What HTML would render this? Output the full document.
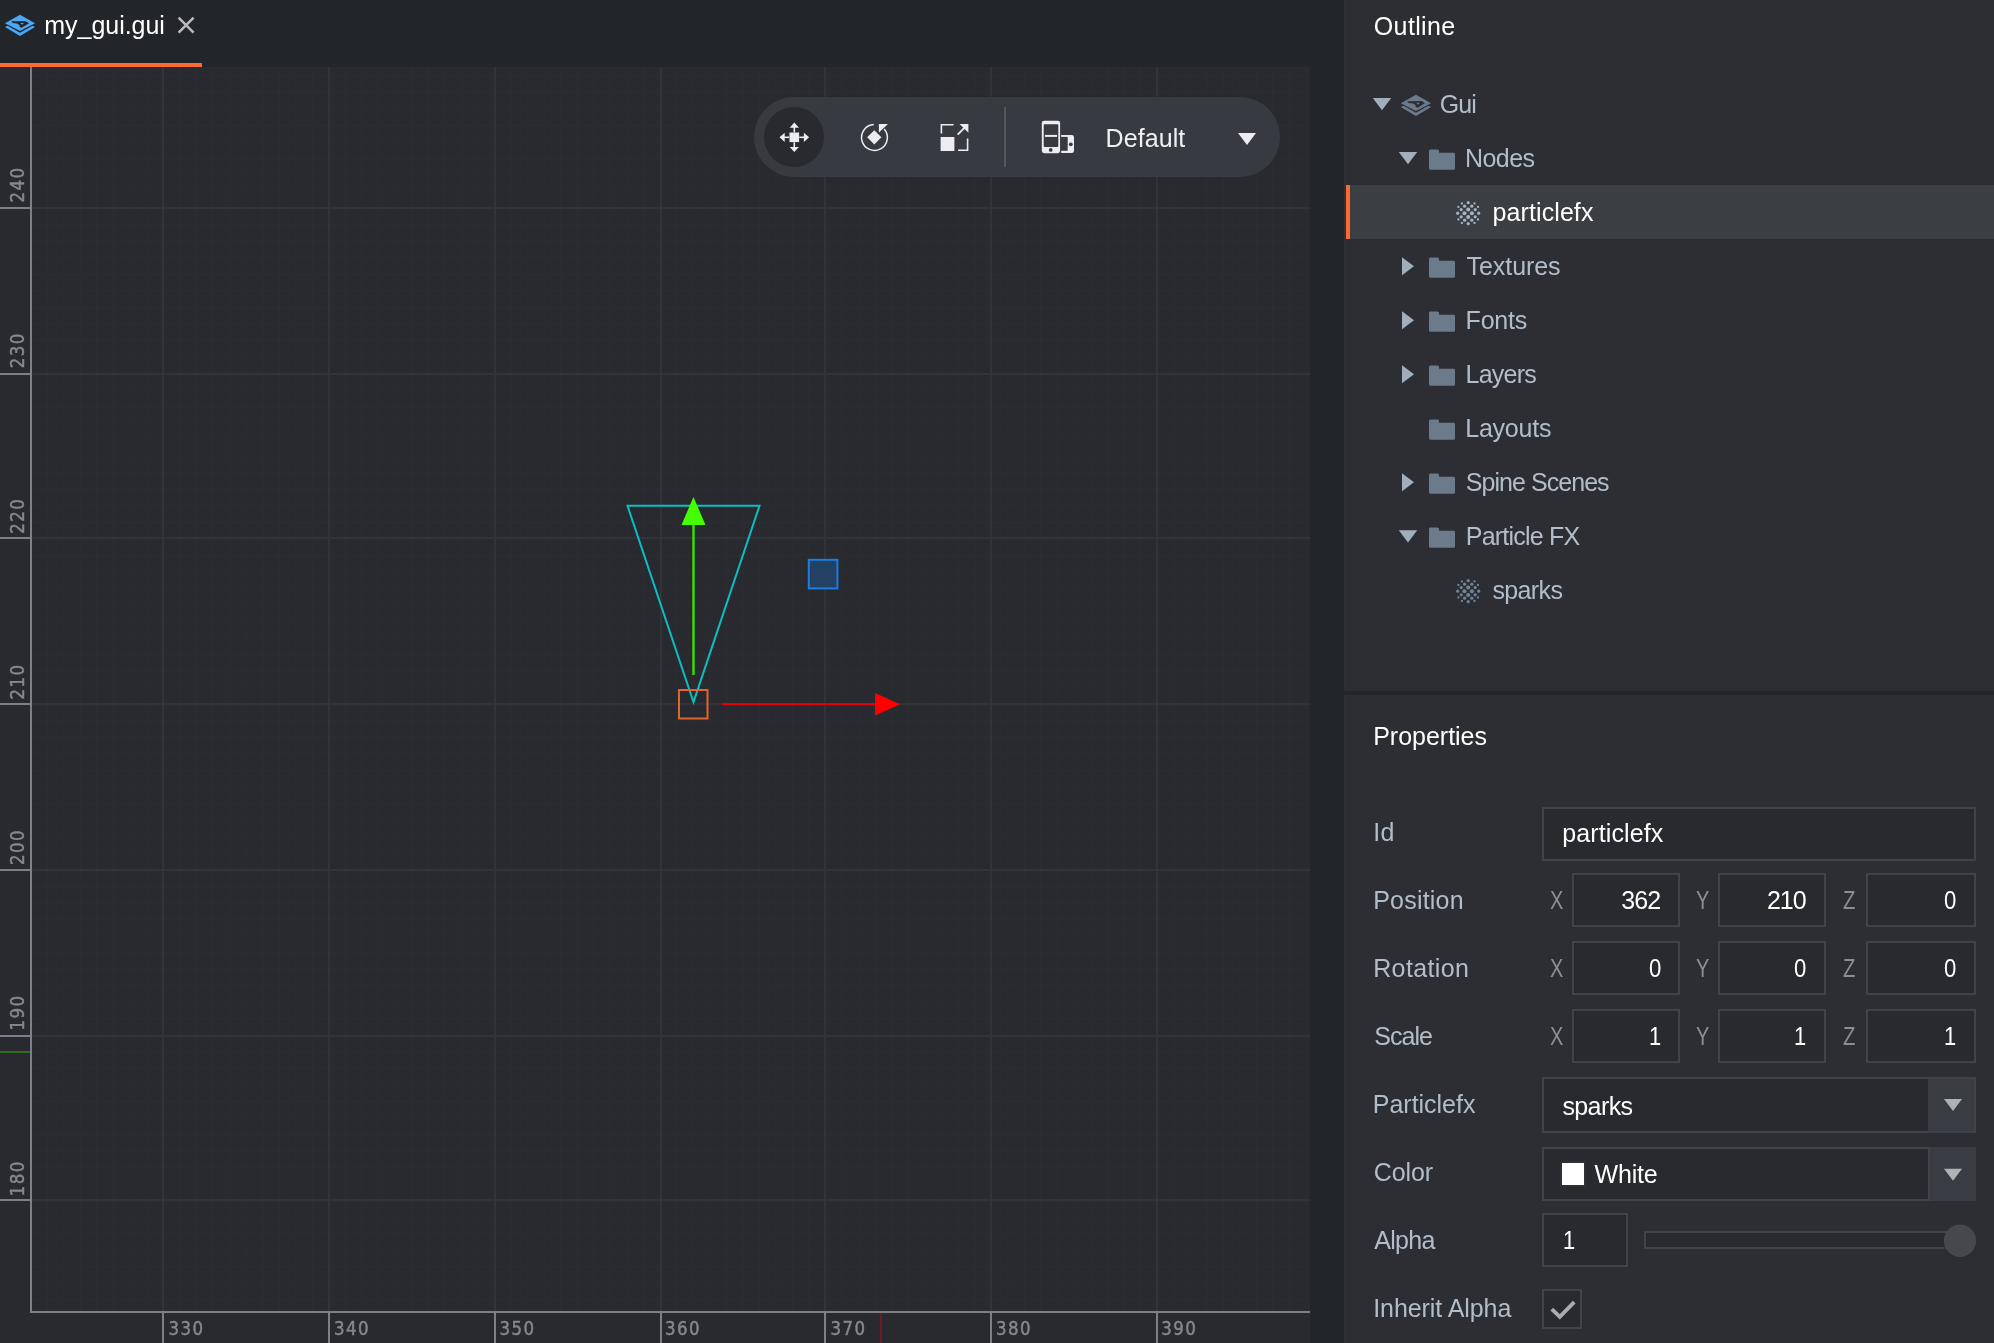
<!DOCTYPE html>
<html lang="en">
<head>
<meta charset="utf-8">
<title>my_gui.gui</title>
<style>
html,body{margin:0;padding:0;}
body{width:1994px;height:1343px;overflow:hidden;background:#22252a;position:relative;
  font-family:"Liberation Sans",sans-serif;font-size:25px;color:#b3bdc9;}
*{box-sizing:border-box;}
.abs{position:absolute;}
.t{position:absolute;white-space:nowrap;line-height:30px;height:30px;}
#tabline{left:0;top:63px;width:202px;height:4px;background:#fd6a2f;}
#panel{left:1344px;top:0;width:650px;height:1343px;background:#2d2e34;border-left:1px solid #303137;}
#divider{left:1344px;top:691px;width:650px;height:3.6px;background:#22252a;}
#selrow{left:1346px;top:185px;width:648px;height:54px;background:#3b3e43;}
#selbar{left:1346px;top:185px;width:4px;height:54px;background:#fd6a2f;}
.field{position:absolute;background:#292a30;border:2px solid #40434b;height:54px;}
.btn{position:absolute;background:#393c42;}
svg{position:absolute;left:0;top:0;overflow:hidden;}
svg text{font-family:"DejaVu Sans Condensed","DejaVu Sans",sans-serif;}
</style>
</head>
<body>
<div id="tabline" class="abs"></div>
<div id="panel" class="abs"></div>
<div id="divider" class="abs"></div>
<div id="selrow" class="abs"></div>
<div id="selbar" class="abs"></div>
<svg width="1344" height="1343" viewBox="0 0 1344 1343" style="will-change:transform">
<rect x="0" y="67" width="1310" height="1276" fill="#292a30"/>
<defs><pattern id="mg" x="162.4" y="207.4" width="16.563" height="16.54" patternUnits="userSpaceOnUse"><rect x="0" y="0" width="1.2" height="16.54" fill="#2a2c31"/><rect x="0" y="0" width="16.563" height="1.2" fill="#2a2c31"/></pattern></defs>
<rect x="32" y="67" width="1278" height="1244" fill="url(#mg)"/>
<rect x="162.0" y="67" width="2" height="1244" fill="#303338"/>
<rect x="328.0" y="67" width="2" height="1244" fill="#303338"/>
<rect x="494.0" y="67" width="2" height="1244" fill="#303338"/>
<rect x="660.0" y="67" width="2" height="1244" fill="#303338"/>
<rect x="824.0" y="67" width="2" height="1244" fill="#303338"/>
<rect x="990.0" y="67" width="2" height="1244" fill="#303338"/>
<rect x="1156.0" y="67" width="2" height="1244" fill="#303338"/>
<rect x="32" y="207.0" width="1278" height="2" fill="#303338"/>
<rect x="32" y="373.0" width="1278" height="2" fill="#303338"/>
<rect x="32" y="537.0" width="1278" height="2" fill="#303338"/>
<rect x="32" y="703.0" width="1278" height="2" fill="#303338"/>
<rect x="32" y="869.0" width="1278" height="2" fill="#303338"/>
<rect x="32" y="1035.0" width="1278" height="2" fill="#303338"/>
<rect x="32" y="1199.0" width="1278" height="2" fill="#303338"/>
<rect x="30" y="67" width="2" height="1246" fill="#7d8086"/>
<rect x="30" y="1311" width="1280" height="2" fill="#7d8086"/>
<rect x="162.0" y="1313" width="2" height="30" fill="#7d8086"/>
<text transform="translate(168.6 1335.2) scale(0.94 1)" font-size="19.7" letter-spacing="1.5" fill="#85888e" stroke="#85888e" stroke-width="0.45">330</text>
<rect x="328.0" y="1313" width="2" height="30" fill="#7d8086"/>
<text transform="translate(334.0 1335.2) scale(0.94 1)" font-size="19.7" letter-spacing="1.5" fill="#85888e" stroke="#85888e" stroke-width="0.45">340</text>
<rect x="494.0" y="1313" width="2" height="30" fill="#7d8086"/>
<text transform="translate(499.5 1335.2) scale(0.94 1)" font-size="19.7" letter-spacing="1.5" fill="#85888e" stroke="#85888e" stroke-width="0.45">350</text>
<rect x="660.0" y="1313" width="2" height="30" fill="#7d8086"/>
<text transform="translate(664.9 1335.2) scale(0.94 1)" font-size="19.7" letter-spacing="1.5" fill="#85888e" stroke="#85888e" stroke-width="0.45">360</text>
<rect x="824.0" y="1313" width="2" height="30" fill="#7d8086"/>
<text transform="translate(830.4 1335.2) scale(0.94 1)" font-size="19.7" letter-spacing="1.5" fill="#85888e" stroke="#85888e" stroke-width="0.45">370</text>
<rect x="990.0" y="1313" width="2" height="30" fill="#7d8086"/>
<text transform="translate(995.9 1335.2) scale(0.94 1)" font-size="19.7" letter-spacing="1.5" fill="#85888e" stroke="#85888e" stroke-width="0.45">380</text>
<rect x="1156.0" y="1313" width="2" height="30" fill="#7d8086"/>
<text transform="translate(1161.3 1335.2) scale(0.94 1)" font-size="19.7" letter-spacing="1.5" fill="#85888e" stroke="#85888e" stroke-width="0.45">390</text>
<rect x="0" y="207.0" width="30" height="2" fill="#7d8086"/>
<text transform="translate(24.2 202.6) rotate(-90) scale(0.94 1)" font-size="19.7" letter-spacing="1.5" fill="#85888e" stroke="#85888e" stroke-width="0.45">240</text>
<rect x="0" y="373.0" width="30" height="2" fill="#7d8086"/>
<text transform="translate(24.2 368.2) rotate(-90) scale(0.94 1)" font-size="19.7" letter-spacing="1.5" fill="#85888e" stroke="#85888e" stroke-width="0.45">230</text>
<rect x="0" y="537.0" width="30" height="2" fill="#7d8086"/>
<text transform="translate(24.2 533.8) rotate(-90) scale(0.94 1)" font-size="19.7" letter-spacing="1.5" fill="#85888e" stroke="#85888e" stroke-width="0.45">220</text>
<rect x="0" y="703.0" width="30" height="2" fill="#7d8086"/>
<text transform="translate(24.2 699.4) rotate(-90) scale(0.94 1)" font-size="19.7" letter-spacing="1.5" fill="#85888e" stroke="#85888e" stroke-width="0.45">210</text>
<rect x="0" y="869.0" width="30" height="2" fill="#7d8086"/>
<text transform="translate(24.2 865.0) rotate(-90) scale(0.94 1)" font-size="19.7" letter-spacing="1.5" fill="#85888e" stroke="#85888e" stroke-width="0.45">200</text>
<rect x="0" y="1035.0" width="30" height="2" fill="#7d8086"/>
<text transform="translate(24.2 1030.6) rotate(-90) scale(0.94 1)" font-size="19.7" letter-spacing="1.5" fill="#85888e" stroke="#85888e" stroke-width="0.45">190</text>
<rect x="0" y="1199.0" width="30" height="2" fill="#7d8086"/>
<text transform="translate(24.2 1196.2) rotate(-90) scale(0.94 1)" font-size="19.7" letter-spacing="1.5" fill="#85888e" stroke="#85888e" stroke-width="0.45">180</text>
<rect x="0" y="1051" width="30" height="2" fill="#2e7020"/>
<rect x="880" y="1313" width="2" height="30" fill="#6e1c20"/>
<polygon points="627.5,505.8 759.5,505.8 693.5,702" fill="none" stroke="#0abfc1" stroke-width="2"/>
<rect x="808.8" y="559.8" width="28.6" height="28.6" fill="#244063" stroke="#1b7ee0" stroke-width="2"/>
<rect x="679" y="690" width="28.5" height="28.5" fill="none" stroke="#e0652c" stroke-width="2"/>
<rect x="692.3" y="524" width="2.4" height="151" fill="#3fe000"/>
<polygon points="693.5,497 705.5,525 681.5,525" fill="#44ff00"/>
<rect x="722" y="703" width="154" height="2.4" fill="#e00008"/>
<polygon points="900,704.2 875,693 875,715.5" fill="#ff0000"/>
<rect x="754" y="97" width="526" height="80" rx="40" fill="#383a42"/>
<circle cx="794" cy="137" r="30" fill="#292a30"/>
<rect x="1004" y="107" width="2" height="60" fill="#54565c"/>
<g transform="translate(794.3 137.3)" fill="#ececf2" stroke="none"><rect x="-4.8" y="-4.8" width="9.6" height="9.6"/><rect x="-0.8" y="-11" width="1.6" height="6"/><rect x="-0.8" y="5" width="1.6" height="6"/><rect x="-11" y="-0.8" width="6" height="1.6"/><rect x="5" y="-0.8" width="6" height="1.6"/><polygon points="0,-14.8 4.6,-9.6 -4.6,-9.6"/><polygon points="0,14.8 4.6,9.6 -4.6,9.6"/><polygon points="-14.8,0 -9.6,-4.6 -9.6,4.6"/><polygon points="14.8,0 9.6,-4.6 9.6,4.6"/></g>
<g><path d="M 873.78,124.62 A 12.9,12.9 0 1 0 884.19,129.04" fill="none" stroke="#ececf2" stroke-width="1.5"/><polygon points="874.3,130.2 881.4,137.3 874.3,144.4 867.2,137.3" fill="#ececf2"/><polygon points="878.9,124.1 888,124.1 878.9,132.4" fill="#ececf2"/></g>
<g fill="#ececf2"><rect x="940.6" y="137" width="13.8" height="14"/><path d="M940.6,133.5 v-9.6 h13 v1.6 h-11.4 v8 z"/><path d="M958,151 v-1.6 h8.8 v-11 h1.6 v12.6 z"/><polygon points="959.5,123.9 968.4,123.9 968.4,132.8"/><path d="M957,134 l8.2,-8.2 l1.3,1.3 l-8.2,8.2 z"/></g>
<g><rect x="1041.8" y="120.7" width="18.3" height="32.5" rx="2.4" fill="#ececf2"/><rect x="1043.7" y="124.3" width="14.6" height="22.6" rx="0.8" fill="#383a42"/><rect x="1044.9" y="134.9" width="12.2" height="2" fill="#ececf2"/><circle cx="1050.7" cy="149.9" r="1.9" fill="#383a42"/><path d="M1061.2,134.9 h10.6 q2.2,0 2.2,2.2 v13.7 q0,2.2 -2.2,2.2 h-10.6 z" fill="#ececf2"/><rect x="1060.6" y="136.9" width="7.1" height="13.9" fill="#383a42"/><circle cx="1070.8" cy="144.3" r="1.9" fill="#383a42"/></g>
<polygon points="1238,133 1256,133 1247,145" fill="#ececf2"/>
<g transform="translate(4.94 14.84)"><polygon points="15.06,0 30.12,8.36 15.06,16.2 0,8.36" fill="#4aa8f5"/><polygon points="0,12.1 15.06,21.13 30.12,12.1 27.5,10.85 15.06,17.85 2.65,10.85" fill="#4aa8f5"/><polygon points="6.1,6.4 20.75,6.3 24.1,8.5 16.6,13.0 14.4,11.9 14.95,10.7 12.2,8.65 7.7,8.15" fill="#22252a"/><polygon points="15.3,8.05 18.85,8.05 17.35,9.95" fill="#4aa8f5"/></g>
<path d="M178.6,17.6 L193.6,32.6 M193.6,17.6 L178.6,32.6" stroke="#b9b9b9" stroke-width="2.6" fill="none"/>
</svg>
<div class="field" style="left:1542px;top:807px;width:434px;height:54px;"></div>
<div class="field" style="left:1572px;top:873px;width:108px;height:54px;"></div>
<div class="field" style="left:1718px;top:873px;width:108px;height:54px;"></div>
<div class="field" style="left:1866px;top:873px;width:110px;height:54px;"></div>
<div class="field" style="left:1572px;top:941px;width:108px;height:54px;"></div>
<div class="field" style="left:1718px;top:941px;width:108px;height:54px;"></div>
<div class="field" style="left:1866px;top:941px;width:110px;height:54px;"></div>
<div class="field" style="left:1572px;top:1009px;width:108px;height:54px;"></div>
<div class="field" style="left:1718px;top:1009px;width:108px;height:54px;"></div>
<div class="field" style="left:1866px;top:1009px;width:110px;height:54px;"></div>
<div class="field" style="left:1542px;top:1077px;width:434px;height:56px;"></div>
<div class="btn" style="left:1928px;top:1079px;width:46px;height:52px;"></div>
<div class="field" style="left:1542px;top:1147px;width:434px;height:54px;"></div>
<div class="abs" style="left:1928px;top:1149px;width:2px;height:50px;background:#40434b;"></div>
<div class="btn" style="left:1930px;top:1147px;width:46px;height:54px;"></div>
<div class="abs" style="left:1560px;top:1161px;width:26px;height:26px;background:#ffffff;border:2px solid #2f3036;"></div>
<div class="field" style="left:1542px;top:1213px;width:86px;height:54px;"></div>
<div class="field" style="left:1644px;top:1231px;width:310px;height:18px;"></div>
<div class="field" style="left:1542px;top:1289px;width:40px;height:40px;"></div>
<svg width="1994" height="1343" viewBox="0 0 1994 1343" style="pointer-events:none">
<polygon points="1372.8,98.0 1391.2,98.0 1382.0,110.2" fill="#a1afbc"/>
<g transform="translate(1400.90 94.80)"><polygon points="15.06,0 30.12,8.36 15.06,16.2 0,8.36" fill="#6c7b8c"/><polygon points="0,12.1 15.06,21.13 30.12,12.1 27.5,10.85 15.06,17.85 2.65,10.85" fill="#6c7b8c"/><polygon points="6.1,6.4 20.75,6.3 24.1,8.5 16.6,13.0 14.4,11.9 14.95,10.7 12.2,8.65 7.7,8.15" fill="#2d2e34"/><polygon points="15.3,8.05 18.85,8.05 17.35,9.95" fill="#6c7b8c"/></g>
<polygon points="1398.8,152.0 1417.2,152.0 1408.0,164.2" fill="#a1afbc"/>
<path d="M1429.0,151.0 q0,-1.5 1.5,-1.5 h7 q1.5,0 1.5,1.5 v1.8 h14.6 q1.4,0 1.4,1.4 v14.4 q0,1.1 -1.1,1.1 h-23.8 q-1.1,0 -1.1,-1.1 z" fill="#6c7b8c"/>
<g fill="#b6c5d4" opacity="0.88"><circle cx="1471.80" cy="220.20" r="1.60"/><circle cx="1475.20" cy="216.80" r="1.60"/><circle cx="1474.50" cy="223.00" r="1.15"/><circle cx="1478.00" cy="219.50" r="1.15"/><circle cx="1471.80" cy="206.20" r="1.60"/><circle cx="1475.20" cy="209.60" r="1.60"/><circle cx="1474.50" cy="203.40" r="1.15"/><circle cx="1478.00" cy="206.90" r="1.15"/><circle cx="1464.60" cy="220.20" r="1.60"/><circle cx="1461.20" cy="216.80" r="1.60"/><circle cx="1461.90" cy="223.00" r="1.15"/><circle cx="1458.40" cy="219.50" r="1.15"/><circle cx="1464.60" cy="206.20" r="1.60"/><circle cx="1461.20" cy="209.60" r="1.60"/><circle cx="1461.90" cy="203.40" r="1.15"/><circle cx="1458.40" cy="206.90" r="1.15"/><circle cx="1468.20" cy="216.95" r="2.05"/><circle cx="1471.95" cy="213.20" r="2.05"/><circle cx="1468.20" cy="223.70" r="1.60"/><circle cx="1478.70" cy="213.20" r="1.60"/><circle cx="1468.20" cy="209.45" r="2.05"/><circle cx="1464.45" cy="213.20" r="2.05"/><circle cx="1468.20" cy="202.70" r="1.60"/><circle cx="1457.70" cy="213.20" r="1.60"/></g>
<polygon points="1402.0,257.3 1414.0,266.3 1402.0,275.3" fill="#a1afbc"/>
<path d="M1429.0,259.0 q0,-1.5 1.5,-1.5 h7 q1.5,0 1.5,1.5 v1.8 h14.6 q1.4,0 1.4,1.4 v14.4 q0,1.1 -1.1,1.1 h-23.8 q-1.1,0 -1.1,-1.1 z" fill="#6c7b8c"/>
<polygon points="1402.0,311.3 1414.0,320.3 1402.0,329.3" fill="#a1afbc"/>
<path d="M1429.0,313.0 q0,-1.5 1.5,-1.5 h7 q1.5,0 1.5,1.5 v1.8 h14.6 q1.4,0 1.4,1.4 v14.4 q0,1.1 -1.1,1.1 h-23.8 q-1.1,0 -1.1,-1.1 z" fill="#6c7b8c"/>
<polygon points="1402.0,365.3 1414.0,374.3 1402.0,383.3" fill="#a1afbc"/>
<path d="M1429.0,367.0 q0,-1.5 1.5,-1.5 h7 q1.5,0 1.5,1.5 v1.8 h14.6 q1.4,0 1.4,1.4 v14.4 q0,1.1 -1.1,1.1 h-23.8 q-1.1,0 -1.1,-1.1 z" fill="#6c7b8c"/>
<path d="M1429.0,421.0 q0,-1.5 1.5,-1.5 h7 q1.5,0 1.5,1.5 v1.8 h14.6 q1.4,0 1.4,1.4 v14.4 q0,1.1 -1.1,1.1 h-23.8 q-1.1,0 -1.1,-1.1 z" fill="#6c7b8c"/>
<polygon points="1402.0,473.3 1414.0,482.3 1402.0,491.3" fill="#a1afbc"/>
<path d="M1429.0,475.0 q0,-1.5 1.5,-1.5 h7 q1.5,0 1.5,1.5 v1.8 h14.6 q1.4,0 1.4,1.4 v14.4 q0,1.1 -1.1,1.1 h-23.8 q-1.1,0 -1.1,-1.1 z" fill="#6c7b8c"/>
<polygon points="1398.8,530.3 1417.2,530.3 1408.0,542.5" fill="#a1afbc"/>
<path d="M1429.0,529.0 q0,-1.5 1.5,-1.5 h7 q1.5,0 1.5,1.5 v1.8 h14.6 q1.4,0 1.4,1.4 v14.4 q0,1.1 -1.1,1.1 h-23.8 q-1.1,0 -1.1,-1.1 z" fill="#6c7b8c"/>
<g fill="#7e8fa3" opacity="0.88"><circle cx="1471.80" cy="598.20" r="1.60"/><circle cx="1475.20" cy="594.80" r="1.60"/><circle cx="1474.50" cy="601.00" r="1.15"/><circle cx="1478.00" cy="597.50" r="1.15"/><circle cx="1471.80" cy="584.20" r="1.60"/><circle cx="1475.20" cy="587.60" r="1.60"/><circle cx="1474.50" cy="581.40" r="1.15"/><circle cx="1478.00" cy="584.90" r="1.15"/><circle cx="1464.60" cy="598.20" r="1.60"/><circle cx="1461.20" cy="594.80" r="1.60"/><circle cx="1461.90" cy="601.00" r="1.15"/><circle cx="1458.40" cy="597.50" r="1.15"/><circle cx="1464.60" cy="584.20" r="1.60"/><circle cx="1461.20" cy="587.60" r="1.60"/><circle cx="1461.90" cy="581.40" r="1.15"/><circle cx="1458.40" cy="584.90" r="1.15"/><circle cx="1468.20" cy="594.95" r="2.05"/><circle cx="1471.95" cy="591.20" r="2.05"/><circle cx="1468.20" cy="601.70" r="1.60"/><circle cx="1478.70" cy="591.20" r="1.60"/><circle cx="1468.20" cy="587.45" r="2.05"/><circle cx="1464.45" cy="591.20" r="2.05"/><circle cx="1468.20" cy="580.70" r="1.60"/><circle cx="1457.70" cy="591.20" r="1.60"/></g>
<polygon points="1944,1099 1962,1099 1953,1111" fill="#b0b1b3"/>
<polygon points="1944,1168.8 1962,1168.8 1953,1180.8" fill="#b0b1b3"/>
<circle cx="1960" cy="1242" r="16.6" fill="#25262b" opacity="0.35"/>
<circle cx="1960" cy="1240.8" r="16.2" fill="#46484d"/>
<polyline points="1551.8,1309.1 1559.8,1316.9 1574.2,1302.1" fill="none" stroke="#aaacaf" stroke-width="3.8"/>
</svg>
<span class="t" style="left:44.30px;top:9.53px;color:#ffffff;letter-spacing:-0.038px">my_gui.gui</span>
<span class="t" style="left:1105.60px;top:123.23px;color:#eef0f5;letter-spacing:0.072px">Default</span>
<span class="t" style="left:1373.80px;top:11.33px;color:#ffffff;letter-spacing:0.365px">Outline</span>
<span class="t" style="left:1439.70px;top:89.03px;color:#b3bdc9;letter-spacing:-0.875px">Gui</span>
<span class="t" style="left:1465.10px;top:143.03px;color:#b3bdc9;letter-spacing:-0.591px">Nodes</span>
<span class="t" style="left:1492.60px;top:197.33px;color:#ffffff;letter-spacing:0.085px">particlefx</span>
<span class="t" style="left:1466.50px;top:251.33px;color:#b3bdc9;letter-spacing:-0.055px">Textures</span>
<span class="t" style="left:1465.60px;top:305.33px;color:#b3bdc9;letter-spacing:-0.231px">Fonts</span>
<span class="t" style="left:1465.60px;top:359.33px;color:#b3bdc9;letter-spacing:-0.767px">Layers</span>
<span class="t" style="left:1465.30px;top:413.33px;color:#b3bdc9;letter-spacing:-0.244px">Layouts</span>
<span class="t" style="left:1465.80px;top:467.33px;color:#b3bdc9;letter-spacing:-0.952px">Spine Scenes</span>
<span class="t" style="left:1465.80px;top:521.33px;color:#b3bdc9;letter-spacing:-0.798px">Particle FX</span>
<span class="t" style="left:1492.40px;top:575.33px;color:#b3bdc9;letter-spacing:-0.627px">sparks</span>
<span class="t" style="left:1373.20px;top:721.03px;color:#ffffff;letter-spacing:-0.016px">Properties</span>
<span class="t" style="left:1373.20px;top:816.63px;color:#b3bdc9;letter-spacing:0.454px">Id</span>
<span class="t" style="left:1373.20px;top:884.68px;color:#b3bdc9;letter-spacing:0.209px">Position</span>
<span class="t" style="left:1373.20px;top:952.73px;color:#b3bdc9;letter-spacing:0.370px">Rotation</span>
<span class="t" style="left:1374.20px;top:1020.78px;color:#b3bdc9;letter-spacing:-0.958px">Scale</span>
<span class="t" style="left:1372.80px;top:1088.83px;color:#b3bdc9;letter-spacing:-0.023px">Particlefx</span>
<span class="t" style="left:1373.80px;top:1156.88px;color:#b3bdc9;letter-spacing:-0.129px">Color</span>
<span class="t" style="left:1374.30px;top:1224.93px;color:#b3bdc9;letter-spacing:-0.709px">Alpha</span>
<span class="t" style="left:1373.20px;top:1292.98px;color:#b3bdc9;letter-spacing:-0.072px">Inherit Alpha</span>
<span class="t" style="left:1562.30px;top:818.33px;color:#ffffff;letter-spacing:0.096px">particlefx</span>
<span class="t" style="left:1549.90px;top:884.63px;color:#8b8e94;transform:scaleX(0.800);transform-origin:0 0">X</span>
<span class="t" style="left:1696.00px;top:884.63px;color:#8b8e94;transform:scaleX(0.800);transform-origin:0 0">Y</span>
<span class="t" style="left:1842.90px;top:884.63px;color:#8b8e94;transform:scaleX(0.813);transform-origin:0 0">Z</span>
<span class="t" style="left:1621.20px;top:884.63px;color:#ffffff;letter-spacing:-0.904px">362</span>
<span class="t" style="left:1767.00px;top:884.63px;color:#ffffff;letter-spacing:-1.054px">210</span>
<span class="t" style="left:1943.60px;top:884.63px;color:#ffffff;transform:scaleX(0.885);transform-origin:0 0">0</span>
<span class="t" style="left:1549.90px;top:952.73px;color:#8b8e94;transform:scaleX(0.800);transform-origin:0 0">X</span>
<span class="t" style="left:1696.00px;top:952.73px;color:#8b8e94;transform:scaleX(0.800);transform-origin:0 0">Y</span>
<span class="t" style="left:1842.90px;top:952.73px;color:#8b8e94;transform:scaleX(0.813);transform-origin:0 0">Z</span>
<span class="t" style="left:1648.70px;top:952.73px;color:#ffffff;transform:scaleX(0.885);transform-origin:0 0">0</span>
<span class="t" style="left:1794.20px;top:952.73px;color:#ffffff;transform:scaleX(0.885);transform-origin:0 0">0</span>
<span class="t" style="left:1943.60px;top:952.73px;color:#ffffff;transform:scaleX(0.885);transform-origin:0 0">0</span>
<span class="t" style="left:1549.90px;top:1020.83px;color:#8b8e94;transform:scaleX(0.800);transform-origin:0 0">X</span>
<span class="t" style="left:1696.00px;top:1020.83px;color:#8b8e94;transform:scaleX(0.800);transform-origin:0 0">Y</span>
<span class="t" style="left:1842.90px;top:1020.83px;color:#8b8e94;transform:scaleX(0.813);transform-origin:0 0">Z</span>
<span class="t" style="left:1648.83px;top:1020.83px;color:#ffffff;transform:scaleX(0.875);transform-origin:0 0">1</span>
<span class="t" style="left:1794.33px;top:1020.83px;color:#ffffff;transform:scaleX(0.875);transform-origin:0 0">1</span>
<span class="t" style="left:1943.72px;top:1020.83px;color:#ffffff;transform:scaleX(0.875);transform-origin:0 0">1</span>
<span class="t" style="left:1562.40px;top:1090.93px;color:#ffffff;letter-spacing:-0.587px">sparks</span>
<span class="t" style="left:1594.60px;top:1158.63px;color:#ffffff;letter-spacing:-0.200px">White</span>
<span class="t" style="left:1562.72px;top:1225.33px;color:#ffffff;transform:scaleX(0.875);transform-origin:0 0">1</span>
</body>
</html>
